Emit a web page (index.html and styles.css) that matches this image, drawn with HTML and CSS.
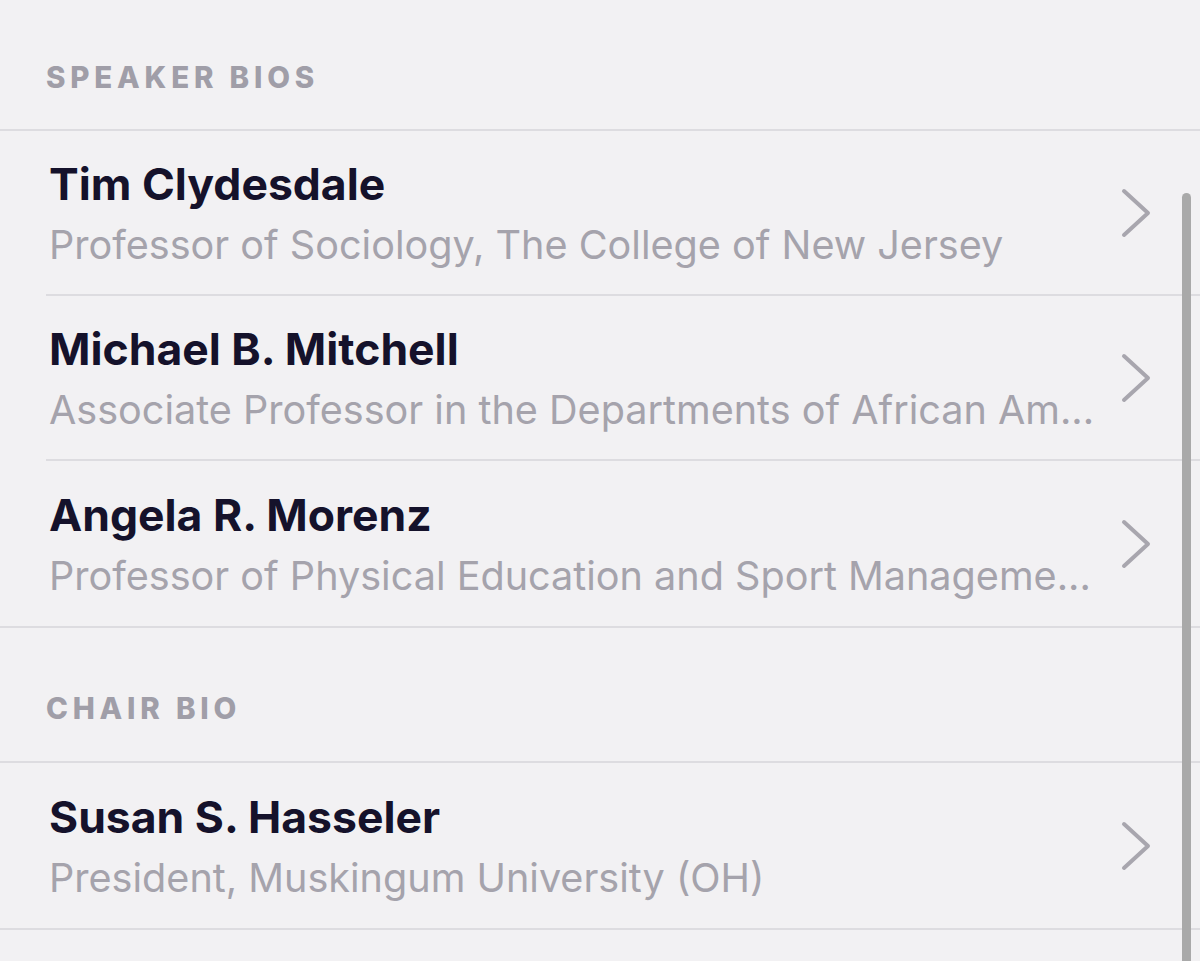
FILE: index.html
```html
<!DOCTYPE html>
<html>
<head>
<meta charset="utf-8">
<link rel="stylesheet" href="styles.css">
</head>
<body>
<div class="page">
  <div class="section-title section-title--first">SPEAKER BIOS</div>
  <div class="list">
    <div class="row">
      <div class="row-text">
        <div class="name">Tim Clydesdale</div>
        <div class="sub">Professor of Sociology, The College of New Jersey</div>
      </div>
      <svg class="chev" viewBox="0 0 32 52" width="32" height="52"><path d="M4 4 L28 26 L4 48"/></svg>
    </div>
    <div class="row">
      <div class="row-text">
        <div class="name">Michael B. Mitchell</div>
        <div class="sub">Associate Professor in the Departments of African Am...</div>
      </div>
      <svg class="chev" viewBox="0 0 32 52" width="32" height="52"><path d="M4 4 L28 26 L4 48"/></svg>
    </div>
    <div class="row">
      <div class="row-text">
        <div class="name">Angela R. Morenz</div>
        <div class="sub">Professor of Physical Education and Sport Manageme...</div>
      </div>
      <svg class="chev" viewBox="0 0 32 52" width="32" height="52"><path d="M4 4 L28 26 L4 48"/></svg>
    </div>
  </div>
  <div class="section-title">CHAIR BIO</div>
  <div class="list">
    <div class="row">
      <div class="row-text">
        <div class="name">Susan S. Hasseler</div>
        <div class="sub">President, Muskingum University (OH)</div>
      </div>
      <svg class="chev" viewBox="0 0 32 52" width="32" height="52"><path d="M4 4 L28 26 L4 48"/></svg>
    </div>
  </div>
  <div class="scrollbar"></div>
</div>
</body>
</html>
```
FILE: styles.css
```css
html, body {
  margin: 0;
  padding: 0;
  background: #f2f1f3;
}
.page {
  position: relative;
  width: 1200px;
  height: 961px;
  overflow: hidden;
  font-family: Inter, "Noto Sans", sans-serif;
}
.section-title {
  height: 133px;
  box-sizing: border-box;
  padding-left: 46px;
  padding-bottom: 38px;
  display: flex;
  align-items: flex-end;
  font-size: 29.5px;
  font-weight: 800;
  letter-spacing: 4.8px;
  color: #a09ea8;
  line-height: 1;
}
.section-title--first {
  height: 129px;
  padding-bottom: 37px;
}
.list {
  border-top: 2px solid #dddce0;
  border-bottom: 2px solid #dddce0;
}
.row {
  margin-left: 46px;
  height: 165px;
  display: flex;
  align-items: center;
  border-bottom: 2px solid #dddce0;
  box-sizing: border-box;
}
.row:last-child {
  border-bottom: none;
  height: 165px;
}
.row-text {
  flex: 1;
  min-width: 0;
  padding-left: 3px;
  padding-right: 10px;
  padding-top: 4px;
}
.name {
  font-size: 44.5px;
  font-weight: 700;
  color: #15122b;
  line-height: 56px;
  letter-spacing: 0;
  white-space: nowrap;
}
.sub {
  margin-top: 4px;
  font-size: 39.6px;
  font-weight: 400;
  color: #a5a3ac;
  line-height: 58px;
  white-space: nowrap;
  overflow: hidden;
  text-overflow: ellipsis;
}
.chev {
  flex: none;
  margin-right: 48px;
  fill: none;
  stroke: #a8a6ae;
  stroke-width: 4;
  stroke-linecap: round;
  stroke-linejoin: round;
}
.scrollbar {
  position: absolute;
  left: 1182px;
  top: 193px;
  bottom: -10px;
  width: 9px;
  border-radius: 5px;
  background: #a9a9a9;
}
```
